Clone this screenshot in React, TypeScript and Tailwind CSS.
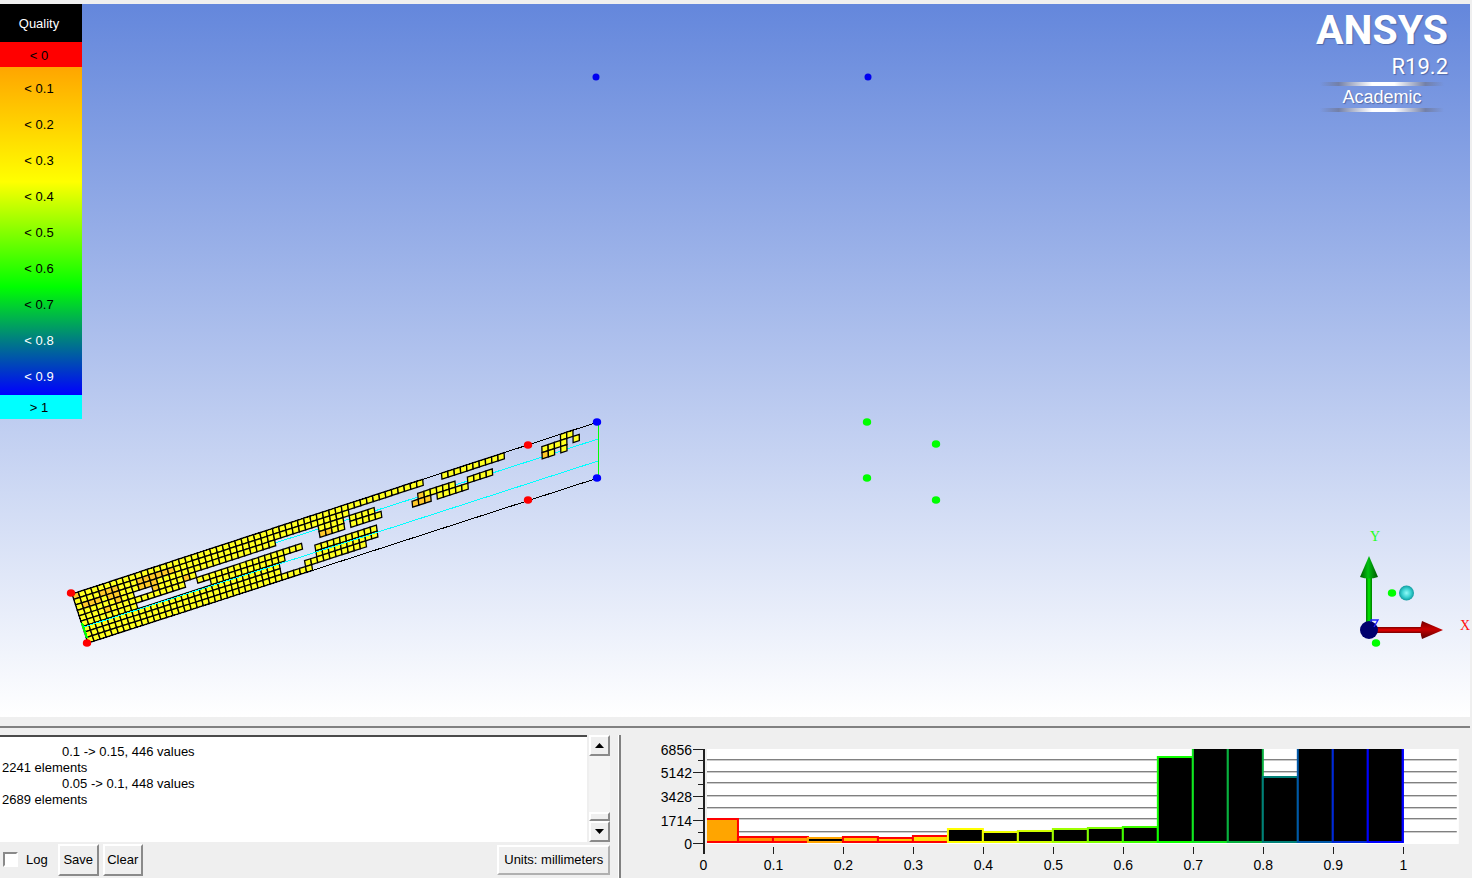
type Point = [number, number];

interface Bar {
  top: number;
  stroke: string;
  fill: string;
}

const LEGEND = [
  { label: "< 0.1", dark: false },
  { label: "< 0.2", dark: false },
  { label: "< 0.3", dark: false },
  { label: "< 0.4", dark: false },
  { label: "< 0.5", dark: false },
  { label: "< 0.6", dark: false },
  { label: "< 0.7", dark: false },
  { label: "< 0.8", dark: true },
  { label: "< 0.9", dark: true },
];

const LOG_TEXT =
  "\t0.1 -> 0.15, 446 values\n2241 elements\n\t0.05 -> 0.1, 448 values\n2689 elements\n";

// Corners of the meshed block
const TL: Point = [72, 594];
const TR: Point = [598, 422];
const BL: Point = [88, 643];
const BR: Point = [598, 478];
const COLS = 84;
const ROWS = 9;

// Visible x ranges of bad cells, per mesh row
const SPANS: Point[][] = [
  [[72, 425], [439, 505], [558, 572]],
  [[72, 347], [540, 565], [571, 579]],
  [[72, 275], [320, 342], [347, 375], [415, 453], [466, 493], [540, 552], [558, 565]],
  [[72, 131], [150, 198], [322, 342], [348, 381], [415, 434], [440, 466]],
  [[72, 183], [197, 303]],
  [[72, 140], [212, 286], [317, 377]],
  [[72, 281], [317, 377]],
  [[72, 282], [306, 365]],
  [[72, 312]],
];

const ORANGE_SPANS: Point[][] = [
  [[72, 78]],
  [[98, 118], [140, 172]],
  [[84, 104], [106, 118], [136, 158], [413, 422], [538, 546]],
  [[118, 124], [150, 157], [182, 190], [320, 334], [413, 428]],
  [[104, 110]],
  [],
  [],
  [],
  [],
];

const BARS: Bar[] = [
  { top: 819, stroke: "#ff0000", fill: "#ffa500" },
  { top: 837, stroke: "#ff0000", fill: "#ff9000" },
  { top: 837, stroke: "#ff0000", fill: "#ff9c00" },
  { top: 838, stroke: "#ffa500", fill: "#000000" },
  { top: 837, stroke: "#ff0000", fill: "#ffc000" },
  { top: 838, stroke: "#ff0000", fill: "#ffc800" },
  { top: 836, stroke: "#ff0000", fill: "#ffdc00" },
  { top: 829, stroke: "#ffff00", fill: "#000000" },
  { top: 832, stroke: "#f0ff00", fill: "#000000" },
  { top: 831, stroke: "#d0ff00", fill: "#000000" },
  { top: 829, stroke: "#a0ff00", fill: "#000000" },
  { top: 828, stroke: "#80ff00", fill: "#000000" },
  { top: 827, stroke: "#40ff00", fill: "#000000" },
  { top: 757, stroke: "#10ff00", fill: "#000000" },
  { top: 740, stroke: "#10e820", fill: "#000000" },
  { top: 740, stroke: "#08b040", fill: "#000000" },
  { top: 777, stroke: "#008078", fill: "#000000" },
  { top: 740, stroke: "#0058a8", fill: "#000000" },
  { top: 740, stroke: "#0028d8", fill: "#000000" },
  { top: 740, stroke: "#0000ff", fill: "#000000" },
];

const Y_TICKS = [
  { label: "6856", y: 750 },
  { label: "5142", y: 773 },
  { label: "3428", y: 797 },
  { label: "1714", y: 821 },
  { label: "0", y: 844 },
];
const X_TICKS = ["0", "0.1", "0.2", "0.3", "0.4", "0.5", "0.6", "0.7", "0.8", "0.9", "1"];

const RAISED =
  "border-2 border-t-white border-l-white border-r-[#8a8a8a] border-b-[#8a8a8a] bg-[#efefef]";

function meshPoint(u: number, v: number): Point {
  const x = (1 - v) * (TL[0] + u * (TR[0] - TL[0])) + v * (BL[0] + u * (BR[0] - BL[0]));
  const y = (1 - v) * (TL[1] + u * (TR[1] - TL[1])) + v * (BL[1] + u * (BR[1] - BL[1]));
  return [x, y];
}

const inSpans = (x: number, spans: Point[]) => spans.some(([a, b]) => x >= a && x <= b);

function buildCells() {
  const cells: { key: string; points: string; fill: string }[] = [];
  for (let r = 0; r < ROWS; r++) {
    for (let c = 0; c < COLS; c++) {
      const [cx] = meshPoint((c + 0.5) / COLS, (r + 0.5) / ROWS);
      if (!inSpans(cx, SPANS[r])) continue;
      const corners = [
        meshPoint(c / COLS, r / ROWS),
        meshPoint((c + 1) / COLS, r / ROWS),
        meshPoint((c + 1) / COLS, (r + 1) / ROWS),
        meshPoint(c / COLS, (r + 1) / ROWS),
      ];
      cells.push({
        key: `${r}-${c}`,
        points: corners.map((p) => p.join(",")).join(" "),
        fill: inSpans(cx, ORANGE_SPANS[r]) ? "#ffc828" : "#ffff20",
      });
    }
  }
  return cells;
}

const CELLS = buildCells();

function Dot({ x, y, color }: { x: number; y: number; color: string }) {
  return <ellipse cx={x} cy={y} rx={4.2} ry={3.8} fill={color} />;
}

function Triad() {
  return (
    <g>
      <defs>
        <linearGradient id="shaft-y" x1="0" x2="1" y1="0" y2="0">
          <stop offset="0" stopColor="#007800" />
          <stop offset="0.5" stopColor="#00f000" />
          <stop offset="1" stopColor="#007800" />
        </linearGradient>
        <linearGradient id="cone-y" x1="0" x2="1" y1="0" y2="0">
          <stop offset="0" stopColor="#005c00" />
          <stop offset="0.45" stopColor="#00c010" />
          <stop offset="1" stopColor="#005400" />
        </linearGradient>
        <linearGradient id="shaft-x" x1="0" x2="0" y1="0" y2="1">
          <stop offset="0" stopColor="#800000" />
          <stop offset="0.5" stopColor="#e80000" />
          <stop offset="1" stopColor="#780000" />
        </linearGradient>
        <linearGradient id="cone-x" x1="0" x2="0" y1="0" y2="1">
          <stop offset="0" stopColor="#700000" />
          <stop offset="0.45" stopColor="#c80000" />
          <stop offset="1" stopColor="#580000" />
        </linearGradient>
        <radialGradient id="ball">
          <stop offset="0" stopColor="#90fbf8" />
          <stop offset="0.6" stopColor="#38d0d0" />
          <stop offset="1" stopColor="#109ca0" />
        </radialGradient>
      </defs>
      <rect x="1366" y="575" width="6" height="54" fill="url(#shaft-y)" />
      <path d="M1369 556 L1378 577 Q1369 580 1360 577 Z" fill="url(#cone-y)" />
      <rect x="1372" y="627" width="51" height="6" fill="url(#shaft-x)" />
      <path d="M1443 630 L1422 621 Q1419 630 1422 639 Z" fill="url(#cone-x)" />
      <circle cx="1369" cy="630" r="9" fill="#00006e" />
      <path d="M1371 622 V620 H1378 L1374 627" fill="none" stroke="#2020ff" strokeWidth="1.4" />
      <Dot x={1392} y={593} color="#00ff00" />
      <Dot x={1376} y={643} color="#00ff00" />
      <circle cx="1406.500" cy="593" r="7.500" fill="url(#ball)" />
      <text x="1375" y="541" fill="#20ff20" textAnchor="middle" className="font-['Liberation_Serif',serif] text-[14px]">
        Y
      </text>
      <text x="1465" y="630" fill="#ff1010" textAnchor="middle" className="font-['Liberation_Serif',serif] text-[14px]">
        X
      </text>
    </g>
  );
}

function MeshCanvas() {
  return (
    <svg viewBox="0 4 1470 713" className="h-full w-full" role="img" aria-label="Mesh">
      <path d="M275 543 L598 439" stroke="#00ffff" fill="none" shapeRendering="crispEdges" />
      <g stroke="#000000" strokeWidth="1.3">
        {CELLS.map((cell) => (
          <polygon key={cell.key} points={cell.points} fill={cell.fill} />
        ))}
      </g>
      <g fill="none" shapeRendering="crispEdges">
        <path d="M72 594 L598 422 M88 643 L598 478 M72 594 L88 643" stroke="#000000" />
        <path d="M84 627 L598 461" stroke="#00ffff" />
        <path d="M82 623 L87 638" stroke="#00ff00" strokeWidth="2" />
        <path d="M598.500 422 V478" stroke="#00ff00" strokeWidth="1.500" />
      </g>
      <Dot x={71} y={593} color="#ff0000" />
      <Dot x={87} y={643} color="#ff0000" />
      <Dot x={528} y={445} color="#ff0000" />
      <Dot x={528} y={500} color="#ff0000" />
      <Dot x={597} y={422} color="#0000ff" />
      <Dot x={597} y={478} color="#0000ff" />
      <circle cx={596} cy={77} r={3.5} fill="#0000f0" />
      <circle cx={868} cy={77} r={3.5} fill="#0000f0" />
      <Dot x={867} y={422} color="#00ff00" />
      <Dot x={867} y={478} color="#00ff00" />
      <Dot x={936} y={444} color="#00ff00" />
      <Dot x={936} y={500} color="#00ff00" />
      <Triad />
    </svg>
  );
}

function Legend() {
  return (
    <div className="absolute top-0 left-0 w-[82px] text-center text-[13px] text-black">
      <div className="flex h-[38px] items-center justify-center bg-black pt-[2px] pr-1 text-white">Quality</div>
      <div className="flex h-[25px] items-center justify-center bg-[#ff0000] pt-[2px] pr-1">&lt; 0</div>
      <div className="flex h-[328px] flex-col bg-[linear-gradient(to_bottom,#ffa500_0%,#ffff00_35%,#00ff00_67%,#008080_83%,#0000ff_100%)] pt-1 pr-1">
        {LEGEND.map((item) => (
          <div
            key={item.label}
            className={`flex flex-1 items-center justify-center ${item.dark ? "text-white" : "text-black"}`}
          >
            {item.label}
          </div>
        ))}
      </div>
      <div className="flex h-6 items-center justify-center bg-[#00ffff] pt-[2px] pr-1">&gt; 1</div>
    </div>
  );
}

function Brand() {
  const rule =
    "h-1 w-[124px] bg-[linear-gradient(to_right,transparent,#7380a8_15%,#ffffff_42%,#ffffff_60%,#7380a8_85%,transparent)]";
  return (
    <div className="absolute top-0 right-[22px] flex flex-col items-end text-white [text-shadow:1px_1px_1px_#5068a8]">
      <div className="pt-1 font-[Roboto,sans-serif] text-[41px] leading-[44px] font-bold">ANSYS</div>
      <div className="font-[Roboto,sans-serif] text-[22px] leading-[30px]">R19.2</div>
      <div className="flex flex-col items-center pr-1">
        <div className={rule} />
        <div className="text-[18px] leading-[22px]">Academic</div>
        <div className={rule} />
      </div>
    </div>
  );
}

function Scrollbar() {
  return (
    <div className="ml-[2px] flex w-[21px] flex-col bg-[#f4f4f4]">
      <button aria-label="Scroll up" className={`flex h-[21px] items-center justify-center ${RAISED}`}>
        <svg width="9" height="5" viewBox="0 0 9 5">
          <path d="M4.500 0 L9 5 H0 Z" />
        </svg>
      </button>
      <div className="flex-1" />
      <div className={`h-[9px] ${RAISED}`} />
      <button aria-label="Scroll down" className={`flex h-[21px] items-center justify-center ${RAISED}`}>
        <svg width="9" height="5" viewBox="0 0 9 5">
          <path d="M4.500 5 L9 0 H0 Z" />
        </svg>
      </button>
    </div>
  );
}

function MessagePanel() {
  return (
    <section className="flex w-[42%] shrink-0 flex-col pr-2">
      <div className="flex h-[107px]">
        <textarea
          aria-label="Messages"
          readOnly
          defaultValue={LOG_TEXT}
          className="block flex-1 resize-none overflow-hidden border-t-2 border-[#4a4a4a] bg-white px-[2px] pt-[7px] text-[13px] leading-4 outline-none [tab-size:60px]"
        />
        <Scrollbar />
      </div>
      <div className="flex flex-1 items-center pb-px">
        <label className="flex items-center gap-2 pl-[3px] text-[13px]">
          <input
            type="checkbox"
            className="size-[15px] appearance-none border-2 border-t-[#8a8a8a] border-r-white border-b-white border-l-[#8a8a8a] bg-white"
          />
          Log
        </label>
        <button className={`ml-[10px] h-8 w-[41px] text-[13px] ${RAISED}`}>Save</button>
        <button className={`ml-1 h-8 w-[40px] text-[13px] ${RAISED}`}>Clear</button>
        <button className="ml-auto h-[30px] w-[113px] border-2 border-t-white border-r-[#b0b0b0] border-b-[#b0b0b0] border-l-white bg-[#efefef] text-[13px]">
          Units: millimeters
        </button>
      </div>
    </section>
  );
}

function Histogram() {
  return (
    <svg viewBox="621 735 851 143" className="h-full w-full text-[14px]" role="img" aria-label="Quality histogram">
      <clipPath id="plot">
        <rect x="707" y="749" width="752" height="95" />
      </clipPath>
      <rect x="707" y="749" width="752" height="95" fill="#ffffff" />
      {[760, 772, 783, 796, 808, 819, 832].map((y) => (
        <rect key={y} x="707" y={y - 1} width="750" height="1.400" fill="#808080" />
      ))}
      <g clipPath="url(#plot)" strokeWidth="2">
        {BARS.map((bar, i) => (
          <rect key={i} x={703 + i * 35} y={bar.top} width="35" height={842 - bar.top} fill={bar.fill} stroke={bar.stroke} />
        ))}
        <path d="M1403 740 V843" stroke="#0000ff" />
      </g>
      <g stroke="#202020" shapeRendering="crispEdges">
        <path d="M704 749 V854" strokeWidth="2" />
        {Y_TICKS.map((tick) => (
          <path key={tick.y} d={`M693 ${tick.y - 0.5} H703`} />
        ))}
        {[761, 785, 809, 833].map((y) => (
          <path key={y} d={`M698 ${y - 0.5} H703`} />
        ))}
        {X_TICKS.map((label, i) => (
          <path key={label} d={`M${703.5 + i * 70} 847 V854`} />
        ))}
      </g>
      {Y_TICKS.map((tick) => (
        <text key={tick.label} x="692" y={tick.y + 5} textAnchor="end">
          {tick.label}
        </text>
      ))}
      {X_TICKS.map((label, i) => (
        <text key={label} x={703.5 + i * 70} y="870" textAnchor="middle">
          {label}
        </text>
      ))}
    </svg>
  );
}

export default function App() {
  return (
    <div className="flex h-screen flex-col overflow-hidden bg-[#efefef] pt-1 font-['Liberation_Sans',Arial,sans-serif] text-black">
      <main className="relative mr-[2px] min-h-0 flex-1 bg-[linear-gradient(to_bottom,#6487dc,#ffffff)]">
        <MeshCanvas />
        <Legend />
        <Brand />
      </main>
      <div className="mr-[2px] h-[11px] border-b-2 border-[#808080]" />
      <div className="flex h-[150px] shrink-0 pt-[7px]">
        <MessagePanel />
        <div className="w-[3px] shrink-0 border-r-2 border-l border-r-[#808080] border-l-white" />
        <div className="min-w-0 flex-1">
          <Histogram />
        </div>
      </div>
    </div>
  );
}
